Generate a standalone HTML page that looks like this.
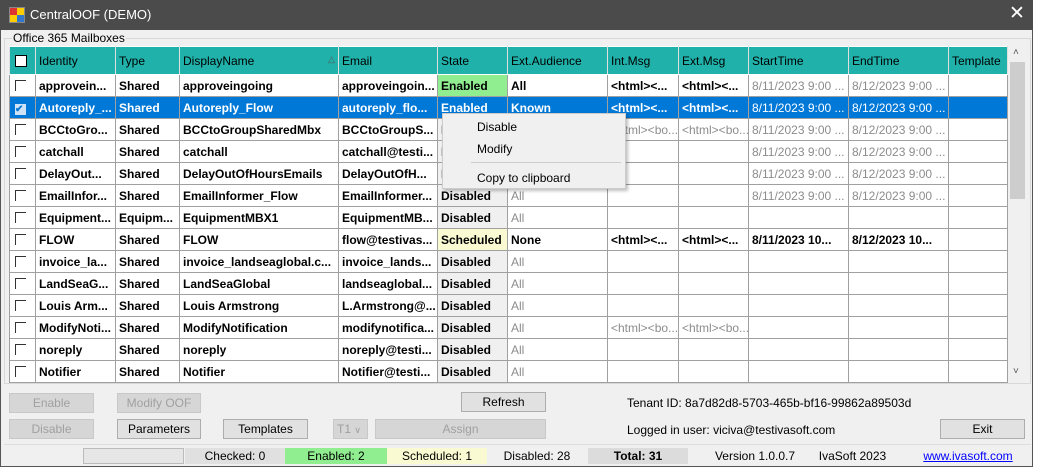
<!DOCTYPE html>
<html><head><meta charset="utf-8"><style>
*{box-sizing:border-box;margin:0;padding:0}
body{width:1038px;height:474px;background:#fff;font-family:"Liberation Sans",Arial,sans-serif;font-size:12px;position:relative;overflow:hidden}
#win{position:absolute;left:0;top:0;width:1033px;height:467px;background:#f0f0f0;border:1px solid #555;border-top:none}
#title{position:absolute;left:0;top:0;width:1033px;height:30px;background:#4b4b4b;color:#fff;font-size:13px}
.abs{position:absolute}
table{position:absolute;left:9px;top:46px;width:998px;border-collapse:collapse;table-layout:fixed;background:#fff}
td,th{border:1px solid #a0a0a0;height:22px;padding:0 3px;white-space:nowrap;overflow:hidden;font-size:12px;text-align:left}
th{background:#20b2aa;font-weight:normal;height:28px;border-color:#fff #e0e0e0;color:#000}
td{font-weight:bold;color:#000}
.g{font-weight:normal;color:#8c8c8c}
.d{background:#f0f0f0}
tr.sel td{background:#0078d7;color:#fff}
.cb{display:inline-block;width:11px;height:11px;border-left:1px solid #333;border-top:1px solid #333;margin-left:2px;margin-top:3px}
.btn{position:absolute;height:20px;border:1px solid #adadad;background:#e1e1e1;text-align:center;line-height:18px;font-size:12px}
.dis{color:#a0a0a0;background:#d6d6d6;border-color:#c8c8c8}
.sb{position:absolute;top:448px;height:16px;line-height:16px;text-align:center;font-size:12px;white-space:nowrap}
</style></head><body>
<div id="win"></div>
<div id="title">
 <svg class="abs" style="left:9px;top:7px" width="16" height="16"><rect x="0" y="0" width="16" height="16" fill="#888"/><rect x="1" y="1" width="7" height="7" fill="#d33"/><rect x="8" y="1" width="7" height="7" fill="#fc0"/><rect x="1" y="8" width="7" height="7" fill="#fc0"/><rect x="8" y="8" width="7" height="7" fill="#37c"/></svg>
 <span class="abs" style="left:30px;top:7px">CentralOOF (DEMO)</span>
 <span class="abs" style="left:1009px;top:2px;font-size:19px">✕</span>
</div>
<div class="abs" style="left:4px;top:38px;width:1027px;height:346px;border:1px solid #d8d8d8"></div>
<span class="abs" style="left:12px;top:31px;background:#f0f0f0;padding:0 1px">Office 365 Mailboxes</span>
<table>
<colgroup><col style="width:26px"><col style="width:80px"><col style="width:64px"><col style="width:159px"><col style="width:99px"><col style="width:70px"><col style="width:100px"><col style="width:71px"><col style="width:70px"><col style="width:100px"><col style="width:100px"><col style="width:59px"></colgroup>
<tr><th><span style="display:inline-block;width:12px;height:12px;border:1px solid #000;background:#fff;margin-top:4px;margin-left:2px"></span></th><th>Identity</th><th>Type</th><th>DisplayName<span style="float:right;font-size:9px;color:#555">△</span></th><th>Email</th><th>State</th><th>Ext.Audience</th><th>Int.Msg</th><th>Ext.Msg</th><th>StartTime</th><th>EndTime</th><th>Template</th></tr>
<tr><td><span class="cb"></span></td><td>approvein...</td><td>Shared</td><td>approveingoing</td><td>approveingoin...</td><td style="background:#90ee90">Enabled</td><td>All</td><td>&lt;html&gt;&lt;...</td><td>&lt;html&gt;&lt;...</td><td class="g">8/11/2023 9:00 ...</td><td class="g">8/12/2023 9:00 ...</td><td></td></tr>
<tr class="sel"><td><span style="display:inline-block;width:11px;height:11px;background:#cfe3f7;color:#0078d7;font-size:10px;line-height:11px;margin-left:2px;margin-top:3px">✔</span></td><td>Autoreply_...</td><td>Shared</td><td>Autoreply_Flow</td><td>autoreply_flo...</td><td>Enabled</td><td>Known</td><td>&lt;html&gt;&lt;...</td><td>&lt;html&gt;&lt;...</td><td style="font-weight:normal">8/11/2023 9:00 ...</td><td style="font-weight:normal">8/12/2023 9:00 ...</td><td></td></tr>
<tr><td><span class="cb"></span></td><td>BCCtoGro...</td><td>Shared</td><td>BCCtoGroupSharedMbx</td><td>BCCtoGroupS...</td><td class="d">Disabled</td><td class="g">All</td><td class="g">&lt;html&gt;&lt;bo...</td><td class="g">&lt;html&gt;&lt;bo...</td><td class="g">8/11/2023 9:00 ...</td><td class="g">8/12/2023 9:00 ...</td><td></td></tr>
<tr><td><span class="cb"></span></td><td>catchall</td><td>Shared</td><td>catchall</td><td>catchall@testi...</td><td class="d">Disabled</td><td class="g">All</td><td></td><td></td><td class="g">8/11/2023 9:00 ...</td><td class="g">8/12/2023 9:00 ...</td><td></td></tr>
<tr><td><span class="cb"></span></td><td>DelayOut...</td><td>Shared</td><td>DelayOutOfHoursEmails</td><td>DelayOutOfH...</td><td class="d">Disabled</td><td class="g">All</td><td></td><td></td><td class="g">8/11/2023 9:00 ...</td><td class="g">8/12/2023 9:00 ...</td><td></td></tr>
<tr><td><span class="cb"></span></td><td>EmailInfor...</td><td>Shared</td><td>EmailInformer_Flow</td><td>EmailInformer...</td><td class="d">Disabled</td><td class="g">All</td><td></td><td></td><td class="g">8/11/2023 9:00 ...</td><td class="g">8/12/2023 9:00 ...</td><td></td></tr>
<tr><td><span class="cb"></span></td><td>Equipment...</td><td>Equipm...</td><td>EquipmentMBX1</td><td>EquipmentMB...</td><td class="d">Disabled</td><td class="g">All</td><td></td><td></td><td></td><td></td><td></td></tr>
<tr><td><span class="cb"></span></td><td>FLOW</td><td>Shared</td><td>FLOW</td><td>flow@testivas...</td><td style="background:#fafad2">Scheduled</td><td>None</td><td>&lt;html&gt;&lt;...</td><td>&lt;html&gt;&lt;...</td><td>8/11/2023 10...</td><td>8/12/2023 10...</td><td></td></tr>
<tr><td><span class="cb"></span></td><td>invoice_la...</td><td>Shared</td><td>invoice_landseaglobal.c...</td><td>invoice_lands...</td><td class="d">Disabled</td><td class="g">All</td><td></td><td></td><td></td><td></td><td></td></tr>
<tr><td><span class="cb"></span></td><td>LandSeaG...</td><td>Shared</td><td>LandSeaGlobal</td><td>landseaglobal...</td><td class="d">Disabled</td><td class="g">All</td><td></td><td></td><td></td><td></td><td></td></tr>
<tr><td><span class="cb"></span></td><td>Louis Arm...</td><td>Shared</td><td>Louis Armstrong</td><td>L.Armstrong@...</td><td class="d">Disabled</td><td class="g">All</td><td></td><td></td><td></td><td></td><td></td></tr>
<tr><td><span class="cb"></span></td><td>ModifyNoti...</td><td>Shared</td><td>ModifyNotification</td><td>modifynotifica...</td><td class="d">Disabled</td><td class="g">All</td><td class="g">&lt;html&gt;&lt;bo...</td><td class="g">&lt;html&gt;&lt;bo...</td><td></td><td></td><td></td></tr>
<tr><td><span class="cb"></span></td><td>noreply</td><td>Shared</td><td>noreply</td><td>noreply@testi...</td><td class="d">Disabled</td><td class="g">All</td><td></td><td></td><td></td><td></td><td></td></tr>
<tr><td><span class="cb"></span></td><td>Notifier</td><td>Shared</td><td>Notifier</td><td>Notifier@testi...</td><td class="d">Disabled</td><td class="g">All</td><td></td><td></td><td></td><td></td><td></td></tr>
</table>
<!-- scrollbar -->
<div class="abs" style="left:1008px;top:46px;width:18px;height:337px;background:#f0f0f0"></div>
<div class="abs" style="left:1010px;top:62px;width:15px;height:137px;background:#cdcdcd"></div>
<span class="abs" style="left:1013px;top:47px;font-size:10px;color:#555">˄</span>
<span class="abs" style="left:1013px;top:366px;font-size:10px;color:#555">˅</span>
<!-- context menu -->
<div class="abs" style="left:442px;top:113px;width:184px;height:76px;background:#f0f0f0;border:1px solid #ccc;box-shadow:2px 2px 3px rgba(0,0,0,.25)">
 <span class="abs" style="left:34px;top:6px">Disable</span>
 <span class="abs" style="left:34px;top:28px">Modify</span>
 <div class="abs" style="left:28px;top:48px;width:150px;height:1px;background:#ccc"></div>
 <span class="abs" style="left:34px;top:57px">Copy to clipboard</span>
</div>
<!-- buttons -->
<div class="btn dis" style="left:9px;top:393px;width:85px">Enable</div>
<div class="btn dis" style="left:117px;top:393px;width:84px">Modify OOF</div>
<div class="btn" style="left:461px;top:392px;width:85px">Refresh</div>
<div class="btn dis" style="left:9px;top:419px;width:85px">Disable</div>
<div class="btn" style="left:117px;top:419px;width:84px">Parameters</div>
<div class="btn" style="left:223px;top:419px;width:85px">Templates</div>
<div class="btn dis" style="left:333px;top:419px;width:35px;text-align:left;padding-left:3px">T1 <span style="font-size:9px">∨</span></div>
<div class="btn dis" style="left:375px;top:419px;width:171px">Assign</div>
<div class="btn" style="left:940px;top:419px;width:85px">Exit</div>
<span class="abs" style="left:627px;top:396px">Tenant ID: 8a7d82d8-5703-465b-bf16-99862a89503d</span>
<span class="abs" style="left:627px;top:423px">Logged in user: viciva@testivasoft.com</span>
<div class="abs" style="left:4px;top:444px;width:1027px;height:1px;background:#ddd"></div>
<!-- status -->
<div class="sb" style="left:83px;width:101px;border:1px solid #bbb;background:#e6e6e6"></div>
<div class="sb" style="left:185px;width:100px;background:#e0e0e0">Checked: 0</div>
<div class="sb" style="left:285px;width:102px;background:#90ee90">Enabled: 2</div>
<div class="sb" style="left:387px;width:100px;background:#fafad2">Scheduled: 1</div>
<div class="sb" style="left:487px;width:100px">Disabled: 28</div>
<div class="sb" style="left:588px;width:100px;background:#dcdcdc;font-weight:bold">Total: 31</div>
<div class="sb" style="left:710px;width:90px">Version 1.0.0.7</div>
<div class="sb" style="left:815px;width:75px">IvaSoft 2023</div>
<div class="sb" style="left:918px;width:100px;color:#00f;text-decoration:underline">www.ivasoft.com</div>
</body></html>
